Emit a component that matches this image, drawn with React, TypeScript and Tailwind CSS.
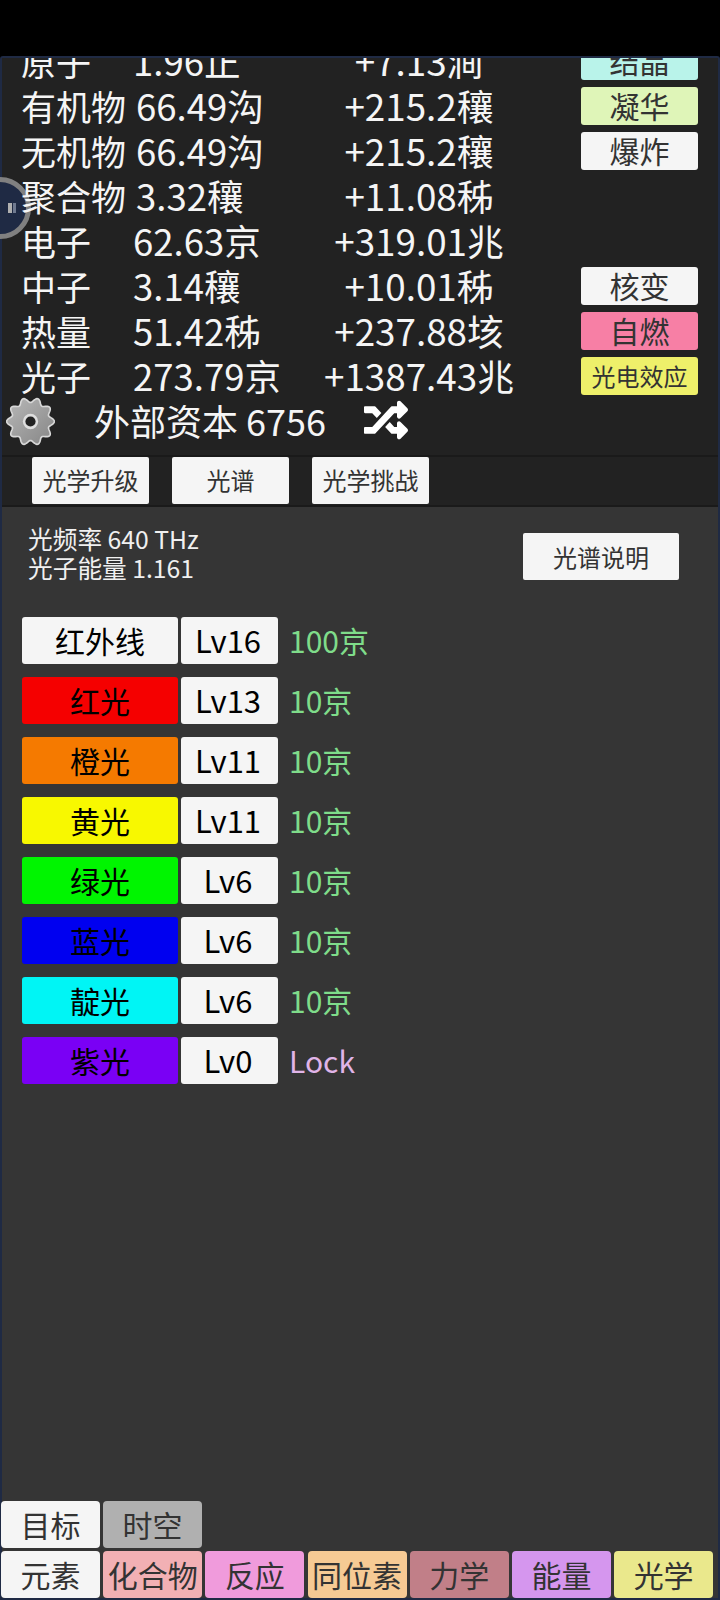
import { FaRandom } from "react-icons/fa";

const font = { fontFamily: '"Noto Sans CJK SC", "Noto Sans", sans-serif' };

const stats = [
  { n: "原子", v: "1.96正", r: "+7.13涧", b: "结晶", c: "bg-[#b9f3ea]" },
  { n: "有机物", v: "66.49沟", r: "+215.2穰", b: "凝华", c: "bg-[#dff5b8]" },
  { n: "无机物", v: "66.49沟", r: "+215.2穰", b: "爆炸", c: "bg-[#f5f5f5]" },
  { n: "聚合物", v: "3.32穰", r: "+11.08秭", b: "", c: "" },
  { n: "电子", v: "62.63京", r: "+319.01兆", b: "", c: "" },
  { n: "中子", v: "3.14穰", r: "+10.01秭", b: "核变", c: "bg-[#f5f5f5]" },
  { n: "热量", v: "51.42秭", r: "+237.88垓", b: "自燃", c: "bg-[#f77fa5]" },
  { n: "光子", v: "273.79京", r: "+1387.43兆", b: "光电效应", c: "bg-[#eef06a]" },
];

const spectrum = [
  { n: "红外线", c: "bg-[#f5f5f5]", l: "Lv16", p: "100京" },
  { n: "红光", c: "bg-[#f50000]", l: "Lv13", p: "10京" },
  { n: "橙光", c: "bg-[#f57a00]", l: "Lv11", p: "10京" },
  { n: "黄光", c: "bg-[#f8f800]", l: "Lv11", p: "10京" },
  { n: "绿光", c: "bg-[#00f500]", l: "Lv6", p: "10京" },
  { n: "蓝光", c: "bg-[#0000f0]", l: "Lv6", p: "10京" },
  { n: "靛光", c: "bg-[#00f5f5]", l: "Lv6", p: "10京" },
  { n: "紫光", c: "bg-[#7a00f5]", l: "Lv0", p: "Lock" },
];

const tabs = [
  { n: "元素", c: "bg-[#f5f5f5]" },
  { n: "化合物", c: "bg-[#f2b0b4]" },
  { n: "反应", c: "bg-[#f09bdc]" },
  { n: "同位素", c: "bg-[#f6ca94]" },
  { n: "力学", c: "bg-[#c17f88]" },
  { n: "能量", c: "bg-[#d596ee]" },
  { n: "光学", c: "bg-[#eae88c]" },
];

function gearPath() {
  const pts: string[] = [];
  const teeth = 10;
  const steps = 180;
  for (let i = 0; i < steps; i++) {
    const a = (i / steps) * Math.PI * 2;
    const r = 21 + 2.4 * Math.cos(a * teeth);
    pts.push(`${(24 + r * Math.cos(a)).toFixed(2)} ${(24 + r * Math.sin(a)).toFixed(2)}`);
  }
  return "M" + pts.join("L") + "Z";
}

function Gear() {
  return (
    <svg width="49" height="49" viewBox="0 0 48 48" className="shrink-0 mt-[2px]">
      <defs>
        <linearGradient id="g" x1="0" y1="0" x2="1" y2="1">
          <stop offset="0" stopColor="#b8b8b8" />
          <stop offset="1" stopColor="#858585" />
        </linearGradient>
      </defs>
      <path d={gearPath()} fill="url(#g)" stroke="#d8d8d8" strokeWidth="1.6" />
      <circle cx="24" cy="24" r="7.5" fill="#dedede" />
      <circle cx="24" cy="24" r="5" fill="#222222" />
    </svg>
  );
}

export default function App() {
  return (
    <div style={font} className="relative w-[720px] h-[1600px] bg-black flex flex-col overflow-hidden">
      <div className="h-[56px] shrink-0" />
      <div className="flex-1 flex flex-col min-h-0 border-2 border-[#1f2a44] rounded-t-[3px] bg-[#353535]">
        <div className="h-[397px] shrink-0 bg-[#222222] overflow-hidden text-[#f5f5f5]">
          <div className="relative z-10 -mt-[20px] pl-[19px]">
            {stats.map((s) => (
              <div key={s.n} className="h-[45px] flex items-center text-[35px] leading-[45px] whitespace-nowrap">
                <div className="w-[278px] shrink-0 flex items-center">
                  <div className="min-w-[112px] pr-[10px]">{s.n}</div>
                  <div className="text-[36.5px]">{s.v}</div>
                </div>
                <div className="w-[240px] shrink-0 text-center text-[36.8px]">{s.r}</div>
                {s.b && (
                  <div className={`ml-[42px] w-[117px] h-[38px] rounded-[3px] flex items-center justify-center text-[#333333] ${s.c} ${s.b.length > 2 ? "text-[24px]" : "text-[30px]"}`}>
                    {s.b}
                  </div>
                )}
              </div>
            ))}
          </div>
          <div className="flex items-center h-[44px] pl-[4px] text-[36px] text-[#f5f5f5]">
            <Gear />
            <span className="ml-[39px] whitespace-nowrap">外部资本 6756</span>
            <FaRandom className="ml-[38px] text-[44px] text-white" />
          </div>
        </div>
        <div className="h-[52px] shrink-0 bg-[#222222] border-t-2 border-[#1a1a1a] border-b-2 flex items-center gap-[23px] pl-[30px]">
          {["光学升级", "光谱", "光学挑战"].map((t) => (
            <div key={t} className="w-[117px] h-[47px] -mt-[2px] bg-[#f5f5f5] rounded-[2px] flex items-center justify-center text-[24px] text-[#333333]">
              {t}
            </div>
          ))}
        </div>
        <div className="flex-1 min-h-0 flex flex-col">
          <div className="flex items-start justify-between pl-[26px] pr-[39px] pt-[17px]">
            <div className="text-[24.7px] leading-[29px] text-[#f0f0f0]">
              <div>光频率 640 THz</div>
              <div>光子能量 1.161</div>
            </div>
            <div className="w-[156px] h-[47px] mt-[9px] bg-[#f5f5f5] rounded-[2px] flex items-center justify-center text-[24px] text-[#333333]">
              光谱说明
            </div>
          </div>
          <div className="mt-[35px] pl-[20px] flex flex-col gap-[13px]">
            {spectrum.map((s) => (
              <div key={s.n} className="flex items-center h-[47px] text-[30px]">
                <div className={`w-[156px] h-[47px] rounded-[3px] flex items-center justify-center text-black ${s.c}`}>{s.n}</div>
                <div className="ml-[3px] w-[97px] h-[47px] pr-[3px] rounded-[3px] bg-[#f5f5f5] flex items-center justify-center text-black text-[31px]">{s.l}</div>
                <div className={`ml-[11px] ${s.p === "Lock" ? "text-[#e0b4e8]" : "text-[#7fdc8a]"}`}>{s.p}</div>
              </div>
            ))}
          </div>
          <div className="mt-auto flex flex-col gap-[3.5px] text-[30px] text-[#333333] -ml-[1px]">
            <div className="flex gap-[3px]">
              <div className="w-[99px] h-[46.6px] rounded-[4px] bg-[#f5f5f5] flex items-center justify-center">目标</div>
              <div className="w-[99px] h-[46.6px] rounded-[4px] bg-[#b0b0b0] flex items-center justify-center">时空</div>
            </div>
            <div className="flex gap-[3.2px]">
              {tabs.map((t) => (
                <div key={t.n} className={`w-[99px] h-[46.6px] rounded-[4px] flex items-center justify-center whitespace-nowrap ${t.c}`}>{t.n}</div>
              ))}
            </div>
          </div>
        </div>
      </div>
      <div className="absolute left-[-31px] top-[177px] w-[62px] h-[62px] rounded-full border-[5px] border-[#808080] bg-[#1f2a44] flex items-center justify-end pr-[10px] gap-[1px]">
        <div className="w-[4px] h-[10px] bg-[#b0b0b0]" />
        <div className="w-[3px] h-[10px] bg-[#707a90]" />
      </div>
    </div>
  );
}
